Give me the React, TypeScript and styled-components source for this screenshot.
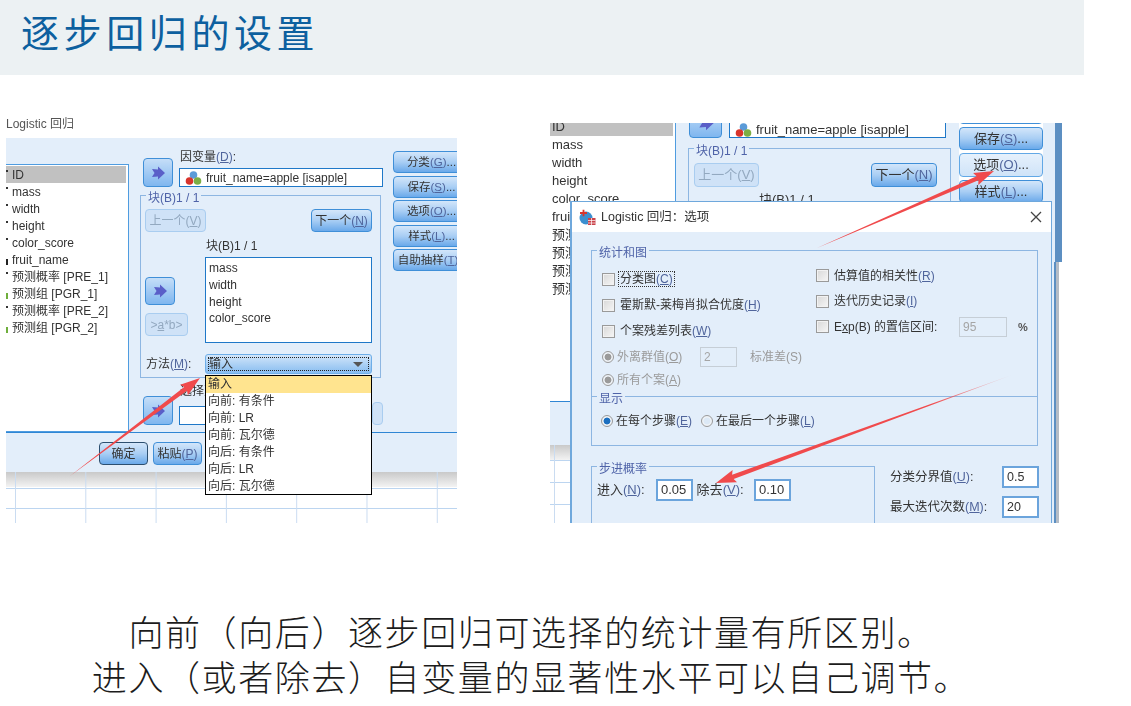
import React from "react";
import styled, { createGlobalStyle } from "styled-components";

const Global = createGlobalStyle`
  html, body { margin: 0; padding: 0; background: #fff; }
  body { font-family: "Liberation Sans", "Noto Sans CJK SC", sans-serif; }
  * { box-sizing: border-box; }
`;

const BLUE = "#e3eefa";
const LINE = "#8db6e2";
const EDGE = "#3f8fd8";
const UI = `"Liberation Sans", "Noto Sans CJK SC", sans-serif`;

const Page = styled.div`
  position: relative;
  width: 1131px;
  height: 706px;
  overflow: hidden;
  background: #fff;
`;
const Header = styled.header`
  width: 1084px;
  height: 75px;
  background: #ecf1f3;
  padding: 9px 0 0 21px;
`;
const Title = styled.h1`
  margin: 0;
  font: 400 38px/44px "Noto Sans CJK SC", sans-serif;
  letter-spacing: 4.6px;
  color: #0d609f;
`;
const Shots = styled.section`
  display: flex;
  align-items: flex-start;
  gap: 93px;
  padding: 42px 0 0 6px;
`;
const Caption = styled.p`
  width: 1062px;
  margin: 85px 0 0;
  text-align: center;
  font: 300 35px/45px "Noto Sans CJK SC", sans-serif;
  letter-spacing: 1.6px;
  color: #1c1c1c;
`;

/* shared widgets */
const Shot = styled.div<{ $w: number; $h: number; $top?: number }>`
  position: relative;
  flex: none;
  width: ${(p) => p.$w}px;
  height: ${(p) => p.$h}px;
  margin-top: ${(p) => p.$top ?? 0}px;
  overflow: hidden;
  color: #333;
  font: 12px/14px ${UI};
  background: #fff;
  filter: blur(0.3px);
`;
const Btn = styled.div<{ $w?: number; $h?: number; $off?: boolean; $pale?: boolean; $strong?: boolean }>`
  flex: none;
  display: flex;
  align-items: center;
  justify-content: center;
  white-space: nowrap;
  width: ${(p) => (p.$w ? `${p.$w}px` : "auto")};
  height: ${(p) => p.$h ?? 22}px;
  border-radius: 4px;
  border: 1px solid ${(p) => (p.$strong ? "#2c4f70" : p.$off ? "#a9cdf0" : p.$pale ? "#62a8e6" : EDGE)};
  background: ${(p) =>
    p.$off
      ? "#cfe2f7"
      : p.$pale
      ? "linear-gradient(#e6f1fc, #cfe3f8)"
      : "linear-gradient(#d3e6fa, #a9cef4 50%, #6aa9ea)"};
  color: ${(p) => (p.$off ? "#93a9c0" : "#333")};
`;
const ArrowBtnBox = styled(Btn)`
  background: linear-gradient(#c5def8, #7fb6ef);
`;
const Field = styled.div<{ $w?: number; $h?: number; $mute?: boolean }>`
  flex: none;
  display: flex;
  align-items: center;
  gap: 4px;
  width: ${(p) => (p.$w ? `${p.$w}px` : "auto")};
  height: ${(p) => p.$h ?? 19}px;
  padding-left: 3px;
  background: ${(p) => (p.$mute ? "transparent" : "#fff")};
  border: ${(p) => (p.$mute ? "1px solid #c6ced6" : `2px solid #6ba4dc`)};
  color: ${(p) => (p.$mute ? "#a5a5a5" : "#333")};
  white-space: nowrap;
`;
const ThinField = styled(Field)`
  border: 1px solid #1f78c8;
  padding-left: 5px;
`;
const Group = styled.div<{ $w: number; $h: number; $ml?: number; $mt?: number }>`
  position: relative;
  flex: none;
  width: ${(p) => p.$w}px;
  height: ${(p) => p.$h}px;
  margin-left: ${(p) => p.$ml ?? 0}px;
  margin-top: ${(p) => p.$mt ?? 0}px;
  border: 1px solid ${LINE};
`;
const GroupLabel = styled.span`
  position: absolute;
  top: -5px;
  left: 5px;
  padding: 0 2px;
  background: ${BLUE};
  color: #4f63a8;
  white-space: nowrap;
`;
const VarItem = styled.div<{ $sel?: boolean; $h: number; $pl?: number }>`
  display: flex;
  align-items: center;
  height: ${(p) => p.$h}px;
  padding-left: ${(p) => p.$pl ?? 0}px;
  background: ${(p) => (p.$sel ? "#c1c1c1" : "transparent")};
  white-space: nowrap;
`;
const Marker = styled.i<{ $kind: string }>`
  flex: none;
  width: 6px;
  height: ${(p) => (p.$kind === "dark" ? 2 : 6)}px;
  margin-top: ${(p) => (p.$kind === "dark" ? -8 : 5)}px;
  background: ${(p) =>
    p.$kind === "dark"
      ? "linear-gradient(90deg, #333 0 2px, transparent 2px)"
      : p.$kind === "yellow"
      ? "linear-gradient(90deg, #222 0 2px, transparent 2px)"
      : "linear-gradient(90deg, #6fae3c 0 2px, transparent 2px)"};
`;
const Overlay = styled.svg`
  position: absolute;
  left: 0;
  top: 0;
  pointer-events: none;
`;
const MnText = styled.span`
  color: #50659c;
`;

/* left screenshot */
const WinCaption = styled.div`
  height: 21px;
  padding-top: 1px;
  line-height: 12px;
  color: #555;
  font-size: 12px;
`;
const LeftBody = styled.div`
  height: 334px;
  background: ${BLUE};
`;
const LeftMain = styled.div`
  display: flex;
  height: 294px;
`;
const VarList = styled.div`
  flex: none;
  width: 123px;
  height: 268px;
  margin-top: 26px;
  padding: 1px 2px 0 0;
  background: #fff;
  border: 1px solid #4f9ce0;
  border-left: 0;
`;
const CenterCol = styled.div`
  flex: none;
  width: 264px;
  padding: 12px 0 0 14px;
`;
const BottomRow = styled.div`
  display: flex;
  align-items: flex-end;
  gap: 6px;
`;
const FieldCol = styled.div`
  flex: none;
  display: flex;
  flex-direction: column;
  width: 204px;
`;
const FieldHead = styled.div`
  height: 18px;
  line-height: 15px;
  padding-left: 1px;
`;
const GroupInner = styled.div`
  padding: 13px 0 0 4px;
`;
const NavRow = styled.div`
  display: flex;
  justify-content: space-between;
  width: 227px;
`;
const BlockArea = styled.div`
  display: flex;
  width: 227px;
  margin-top: 7px;
`;
const BlockTools = styled.div`
  flex: none;
  width: 60px;
  padding-top: 38px;
  display: flex;
  flex-direction: column;
  gap: 8px;
`;
const BlockCol = styled.div`
  flex: none;
  width: 167px;
`;
const BlockHead = styled.div`
  height: 18px;
  line-height: 14px;
  padding-left: 1px;
`;
const BlockList = styled.div`
  height: 86px;
  padding: 2px 0 0 3px;
  background: #fff;
  border: 1px solid #1f78c8;
`;
const MethodRow = styled.div`
  display: flex;
  align-items: center;
  width: 227px;
  margin-top: 11px;
`;
const MethodLabel = styled.div`
  flex: none;
  width: 60px;
  padding-left: 1px;
`;
const Select = styled.div`
  position: relative;
  flex: none;
  width: 167px;
  height: 20px;
  padding: 2px;
  border: 1px solid #6eaee8;
  border-radius: 3px;
  background: linear-gradient(#d3e6fa, #88bdf0);
`;
const SelectFocus = styled.div`
  display: flex;
  align-items: center;
  justify-content: space-between;
  height: 100%;
  border: 1px dotted #222;
  padding: 0 5px 0 0;
  line-height: 12px;
`;
const Caret = styled.i`
  width: 0;
  height: 0;
  border-left: 5px solid transparent;
  border-right: 5px solid transparent;
  border-top: 5px solid #555;
`;
const Dropdown = styled.div`
  position: absolute;
  left: -1px;
  top: 20px;
  width: 167px;
  height: 120px;
  border: 1px solid #000;
  background: #fff;
  z-index: 3;
`;
const DropItem = styled.div<{ $on?: boolean }>`
  height: 17px;
  line-height: 17px;
  padding-left: 2px;
  white-space: nowrap;
  background: ${(p) => (p.$on ? "#ffe48f" : "transparent")};
`;
const SelRow = styled(BottomRow)`
  margin-top: 6px;
`;
const SelInput = styled.div`
  display: flex;
  align-items: flex-end;
  width: 204px;
`;
const SelBox = styled.div`
  flex: none;
  width: 193px;
  height: 19px;
  background: #fff;
  border: 1px solid #1f78c8;
`;
const SideCol = styled.div`
  flex: none;
  width: 64px;
  padding-top: 13px;
  display: flex;
  flex-direction: column;
  gap: 2.6px;
`;
const SideBtn = styled(Btn)<{ $pl?: number }>`
  width: 70px;
  padding-left: ${(p) => p.$pl ?? 0}px;
  font-size: 11.5px;
  border-top-right-radius: 0;
  border-bottom-right-radius: 0;
`;
const LeftBar = styled.div`
  display: flex;
  gap: 5px;
  height: 40px;
  padding: 9px 0 0 93px;
  border-top: 1px solid #2f86d4;
`;
const Sheet = styled.div<{ $h: number; $x: number; $y: number; $pitch: number }>`
  height: ${(p) => p.$h}px;
  background-color: #fff;
  background-image:
    linear-gradient(90deg, #cadcf1 1px, transparent 1px),
    linear-gradient(#c9c9c9, #f3f3f3),
    linear-gradient(#bcd5f0 1px, transparent 1px);
  background-size: 70.3px 100%, 100% 15px, 100% ${(p) => p.$pitch}px;
  background-position: ${(p) => p.$x}px 0, 0 0, 0 ${(p) => p.$y}px;
  background-repeat: repeat-x, no-repeat, repeat-y;
`;

/* right screenshot */
const BackTop = styled.div`
  display: flex;
  height: 278px;
`;
const BackList = styled.div`
  flex: none;
  width: 126px;
  padding-right: 2px;
  border-right: 1px solid #4f9ce0;
  font-size: 13px;
`;
const BackRows = styled.div`
  margin-top: -5px;
`;
const BackCenter = styled.div`
  flex: none;
  width: 283px;
  padding-left: 13px;
  background: ${BLUE};
`;
const BackDep = styled.div`
  display: flex;
  gap: 7px;
  height: 15px;
`;
const ClipArrow = styled.div`
  margin-top: -15px;
  flex: none;
`;
const BackField = styled(ThinField)`
  border-top: 0;
  font-size: 13px;
  height: 15px;
  width: 217px;
`;
const BackNav = styled.div`
  display: flex;
  justify-content: space-between;
  padding: 14px 13px 0 5px;
  font-size: 13px;
`;
const BackHead = styled.div`
  padding: 6px 0 0 70px;
  font-size: 13px;
`;
const BackSide = styled.div`
  flex: none;
  width: 84px;
  display: flex;
  flex-direction: column;
  gap: 3px;
  margin-top: -19px;
  font-size: 13px;
`;
const BackEdge = styled.div`
  flex: none;
  width: 19px;
  background: linear-gradient(90deg, ${BLUE} 0 12px, #5c8fc2 12px);
`;
const EdgeStrip = styled.div`
  position: absolute;
  left: 502px;
  top: 139px;
  bottom: 0;
  width: 10px;
  background: linear-gradient(90deg, ${BLUE} 0 2px, #5c8fc2 2px 4px, #b4bcc6 4px 7px, #fff 7px);
`;
const BackBar = styled.div`
  height: 44px;
  background: ${BLUE};
  border-top: 1px solid #2f86d4;
`;
const Dialog = styled.div`
  position: absolute;
  left: 20px;
  top: 78px;
  width: 482px;
  height: 330px;
  border: 1px solid #6fa8dc;
  border-left-width: 2px;
  border-bottom: 0;
  background: ${BLUE};
  font-size: 12px;
`;
const TitleBar = styled.div`
  display: flex;
  align-items: center;
  height: 30px;
  padding: 0 9px 0 7px;
  gap: 5px;
  background: #fff;
  color: #333;
`;
const TitleText = styled.div`
  flex: 1;
  font-size: 12.5px;
`;
const DialogBody = styled.div`
  padding: 18px 0 0 19px;
`;
const StatGrid = styled.div`
  display: grid;
  grid-template-columns: 214px 1fr;
  padding-left: 10px;
`;
const StatCol = styled.div<{ $top: number }>`
  padding-top: ${(p) => p.$top}px;
  display: flex;
  flex-direction: column;
`;
const CheckRow = styled.div<{ $h: number }>`
  display: flex;
  align-items: center;
  gap: 5px;
  height: ${(p) => p.$h}px;
  white-space: nowrap;
`;
const Check = styled.i`
  flex: none;
  width: 13px;
  height: 13px;
  border: 1px solid #9a9a9a;
  background: linear-gradient(135deg, #d8d8d8, #f6f6f6);
  box-shadow: inset 0 0 0 1px #f2f2f2;
`;
const Focus = styled.span`
  outline: 1px dotted #333;
  padding: 0 1px;
  margin-left: -1px;
`;
const Radio = styled.i<{ $on?: boolean; $off?: boolean }>`
  flex: none;
  width: 12px;
  height: 12px;
  border-radius: 50%;
  border: 1px solid #9a9a9a;
  background: radial-gradient(circle, ${(p) => (p.$on ? "#1c6fc0" : p.$off ? "#9a9a9a" : "#dce9f6")} 0 3px, #eef2f6 3.8px);
`;
const RadioRow = styled.div<{ $h: number; $off?: boolean }>`
  display: flex;
  align-items: center;
  gap: 3px;
  height: ${(p) => p.$h}px;
  white-space: nowrap;
  color: ${(p) => (p.$off ? "#9a9a9a" : "#333")};
`;
const OutlierLabel = styled.span`
  flex: none;
  width: 80px;
`;
const UnitLabel = styled.span`
  margin-left: 10px;
`;
const PctLabel = styled.span`
  flex: none;
  width: 120px;
`;
const Pct = styled.b`
  margin-left: 6px;
  font-weight: 700;
  font-size: 11px;
  color: #555;
`;
const DisplayRow = styled(RadioRow)`
  padding: 13px 0 0 9px;
`;
const DisplayLabel = styled.span`
  flex: none;
  width: 82px;
`;
const LowerRow = styled.div`
  display: flex;
`;
const StepRow = styled.div`
  display: flex;
  align-items: center;
  padding: 12px 0 0 5px;
  font-size: 13px;
  white-space: nowrap;
`;
const StepLabel = styled.span<{ $w: number }>`
  flex: none;
  width: ${(p) => p.$w}px;
`;
const CutCol = styled.div`
  flex: none;
  margin: 20px 0 0 15px;
  width: 149px;
  display: flex;
  flex-direction: column;
  gap: 8px;
  font-size: 12.5px;
`;
const CutRow = styled.div`
  display: flex;
  align-items: center;
  justify-content: space-between;
  white-space: nowrap;
`;

/* drawings */
const BentArrow = ({ size = 18 }: { size?: number }) => (
  <svg width={size} height={size} viewBox="0 0 18 18">
    <path d="M3 5 L9 5.5 L9 2.5 L16 9 L9 15.5 L9 12.5 L3 13 L5.5 9 Z" fill="#5a5fc8" />
  </svg>
);
const Balls = () => (
  <svg width="17" height="16" viewBox="0 0 17 16">
    <circle cx="8.5" cy="5" r="3.8" fill="#5b9bd8" />
    <circle cx="4.5" cy="11" r="3.8" fill="#d8342c" />
    <circle cx="12.5" cy="11" r="3.8" fill="#7cae44" />
  </svg>
);
const DialogIcon = () => (
  <svg width="17" height="17" viewBox="0 0 17 17">
    <circle cx="7" cy="9" r="6.5" fill="#3b8fd0" />
    <path d="M1 4h7M4.5 .8v6.5" stroke="#d8342c" strokeWidth="1.8" />
    <rect x="9" y="9" width="7.5" height="7" fill="#c9434a" />
    <path d="M9 11.5h7.5M9 14h7.5M12.5 9v7" stroke="#fff" strokeWidth=".7" />
  </svg>
);
const CloseX = () => (
  <svg width="12" height="12" viewBox="0 0 12 12">
    <path d="M1 1 L11 11 M11 1 L1 11" stroke="#444" strokeWidth="1.3" />
  </svg>
);
function arrowShape(x1: number, y1: number, x2: number, y2: number, headLen: number, headW: number, shaft: number) {
  const len = Math.hypot(x2 - x1, y2 - y1);
  const ux = (x2 - x1) / len;
  const uy = (y2 - y1) / len;
  const nx = -uy;
  const ny = ux;
  const bx = x2 - ux * headLen;
  const by = y2 - uy * headLen;
  const pts = [
    [x1, y1],
    [bx + (nx * shaft) / 2, by + (ny * shaft) / 2],
    [bx + (nx * headW) / 2 - ux * 2, by + (ny * headW) / 2 - uy * 2],
    [x2, y2],
    [bx - (nx * headW) / 2 - ux * 2, by - (ny * headW) / 2 - uy * 2],
    [bx - (nx * shaft) / 2, by - (ny * shaft) / 2],
  ];
  return pts.map((p) => p.map((v) => v.toFixed(1)).join(",")).join(" ");
}

const Mn = ({ k }: { k: string }) => (
  <MnText>
    (<u>{k}</u>)
  </MnText>
);

const vars: [string, string][] = [
  ["ID", "dark"],
  ["mass", "dark"],
  ["width", "dark"],
  ["height", "dark"],
  ["color_score", "dark"],
  ["fruit_name", "yellow"],
  ["预测概率 [PRE_1]", "dark"],
  ["预测组 [PGR_1]", "green"],
  ["预测概率 [PRE_2]", "dark"],
  ["预测组 [PGR_2]", "green"],
];
const block = ["mass", "width", "height", "color_score"];
const methods = ["输入", "向前: 有条件", "向前: LR", "向前: 瓦尔德", "向后: 有条件", "向后: LR", "向后: 瓦尔德"];
const sideLeft: [string, string][] = [
  ["分类", "G"],
  ["保存", "S"],
  ["选项", "O"],
  ["样式", "L"],
];
const backVars = ["ID", "mass", "width", "height", "color_score", "fruit_name", "预测概率 [PRE_1]", "预测组 [PGR_1]", "预测概率 [PRE_2]", "预测组 [PGR_2]"];

const LeftShot = () => (
  <Shot $w={451} $h={406}>
    <WinCaption>Logistic 回归</WinCaption>
    <LeftBody>
      <LeftMain>
        <VarList>
          {vars.map(([name, kind], i) => (
            <VarItem key={name} $h={17} $sel={i === 0}>
              <Marker $kind={kind} />
              {name}
            </VarItem>
          ))}
        </VarList>
        <CenterCol>
          <BottomRow>
            <ArrowBtnBox $w={30} $h={29}>
              <BentArrow />
            </ArrowBtnBox>
            <FieldCol>
              <FieldHead>
                因变量<Mn k="D" />:
              </FieldHead>
              <ThinField $h={19}>
                <Balls />
                <span>fruit_name=apple [isapple]</span>
              </ThinField>
            </FieldCol>
          </BottomRow>
          <Group $w={241} $h={183} $ml={-3} $mt={8}>
            <GroupLabel>块(B)1 / 1</GroupLabel>
            <GroupInner>
              <NavRow>
                <Btn $w={61} $h={23} $off>
                  <span>上一个(<u>V</u>)</span>
                </Btn>
                <Btn $w={61} $h={23}>
                  <span>
                    下一个<Mn k="N" />
                  </span>
                </Btn>
              </NavRow>
              <BlockArea>
                <BlockTools>
                  <ArrowBtnBox $w={30} $h={28}>
                    <BentArrow />
                  </ArrowBtnBox>
                  <Btn $w={43} $h={23} $off>
                    <span>
                      &gt;<u>a</u>*b&gt;
                    </span>
                  </Btn>
                </BlockTools>
                <BlockCol>
                  <BlockHead>块(B)1 / 1</BlockHead>
                  <BlockList>
                    {block.map((b) => (
                      <VarItem key={b} $h={16.7}>
                        {b}
                      </VarItem>
                    ))}
                  </BlockList>
                </BlockCol>
              </BlockArea>
              <MethodRow>
                <MethodLabel>
                  方法<Mn k="M" />:
                </MethodLabel>
                <Select>
                  <SelectFocus>
                    输入
                    <Caret />
                  </SelectFocus>
                  <Dropdown>
                    {methods.map((m, i) => (
                      <DropItem key={i} $on={i === 0}>
                        {m}
                      </DropItem>
                    ))}
                  </Dropdown>
                </Select>
              </MethodRow>
            </GroupInner>
          </Group>
          <SelRow>
            <ArrowBtnBox $w={30} $h={29}>
              <BentArrow />
            </ArrowBtnBox>
            <FieldCol>
              <FieldHead>选择变量</FieldHead>
              <SelInput>
                <SelBox />
                <Btn $w={11} $h={23} $off />
              </SelInput>
            </FieldCol>
          </SelRow>
        </CenterCol>
        <SideCol>
          {sideLeft.map(([t, k]) => (
            <SideBtn key={k} $pl={7}>
              <span>
                {t}
                <Mn k={k} />
                ...
              </span>
            </SideBtn>
          ))}
          <SideBtn>
            <span>
              自助抽样
              <Mn k="T" />
            </span>
          </SideBtn>
        </SideCol>
      </LeftMain>
      <LeftBar>
        <Btn $w={49} $h={23} $strong>
          确定
        </Btn>
        <Btn $w={49} $h={23}>
          <span>
            粘贴<Mn k="P" />
          </span>
        </Btn>
      </LeftBar>
    </LeftBody>
    <Sheet $h={51} $x={9} $y={16} $pitch={20} />
    <Overlay width={451} height={406} viewBox="6 117 451 406">
      <polygon points={arrowShape(70, 476, 200, 378, 18, 13, 4.6)} fill="#f04a4c" />
    </Overlay>
  </Shot>
);

const RightShot = () => (
  <Shot $w={512} $h={400} $top={6}>
    <BackTop>
      <BackList>
        <BackRows>
          {backVars.map((v, i) => (
            <VarItem key={v} $h={18} $pl={2} $sel={i === 0}>
              {v}
            </VarItem>
          ))}
        </BackRows>
      </BackList>
      <BackCenter>
        <BackDep>
          <ClipArrow>
            <ArrowBtnBox $w={33} $h={30}>
              <BentArrow size={20} />
            </ArrowBtnBox>
          </ClipArrow>
          <BackField>
            <Balls />
            <span>fruit_name=apple [isapple]</span>
          </BackField>
        </BackDep>
        <Group $w={263} $h={200} $mt={10} $ml={-1}>
          <GroupLabel>块(B)1 / 1</GroupLabel>
          <BackNav>
            <Btn $w={65} $h={24} $off>
              <span>上一个(<u>V</u>)</span>
            </Btn>
            <Btn $w={66} $h={24}>
              <span>
                下一个<Mn k="N" />
              </span>
            </Btn>
          </BackNav>
          <BackHead>块(B)1 / 1</BackHead>
        </Group>
      </BackCenter>
      <BackSide>
        <Btn $h={20} />
        <Btn $h={23}>
          <span>
            保存<Mn k="S" />
            ...
          </span>
        </Btn>
        <Btn $h={24} $pale>
          <span>
            选项<Mn k="O" />
            ...
          </span>
        </Btn>
        <Btn $h={23}>
          <span>
            样式<Mn k="L" />
            ...
          </span>
        </Btn>
      </BackSide>
      <BackEdge />
    </BackTop>
    <BackBar />
    <Sheet $h={78} $x={4} $y={15} $pitch={22} />
    <EdgeStrip />
    <Dialog>
      <TitleBar>
        <DialogIcon />
        <TitleText>Logistic 回归：选项</TitleText>
        <CloseX />
      </TitleBar>
      <DialogBody>
        <Group $w={447} $h={147}>
          <GroupLabel>统计和图</GroupLabel>
          <StatGrid>
            <StatCol $top={15}>
              <CheckRow $h={26}>
                <Check />
                <Focus>
                  分类图<Mn k="C" />
                </Focus>
              </CheckRow>
              <CheckRow $h={26}>
                <Check />
                <span>
                  霍斯默-莱梅肖拟合优度<Mn k="H" />
                </span>
              </CheckRow>
              <CheckRow $h={26}>
                <Check />
                <span>
                  个案残差列表<Mn k="W" />
                </span>
              </CheckRow>
              <RadioRow $h={26} $off>
                <Radio $off />
                <OutlierLabel>外离群值(<u>O</u>)</OutlierLabel>
                <Field $w={37} $h={20} $mute>
                  2
                </Field>
                <UnitLabel>标准差(S)</UnitLabel>
              </RadioRow>
              <RadioRow $h={19} $off>
                <Radio $off />
                <span>所有个案(<u>A</u>)</span>
              </RadioRow>
            </StatCol>
            <StatCol $top={12}>
              <CheckRow $h={25.5}>
                <Check />
                <span>
                  估算值的相关性<Mn k="R" />
                </span>
              </CheckRow>
              <CheckRow $h={25.5}>
                <Check />
                <span>
                  迭代历史记录<Mn k="I" />
                </span>
              </CheckRow>
              <CheckRow $h={25.5}>
                <Check />
                <PctLabel>
                  E<u>x</u>p(B) 的置信区间:
                </PctLabel>
                <Field $w={48} $h={20} $mute>
                  95
                </Field>
                <Pct>%</Pct>
              </CheckRow>
            </StatCol>
          </StatGrid>
        </Group>
        <Group $w={447} $h={50} $mt={-1}>
          <GroupLabel>显示</GroupLabel>
          <DisplayRow $h={34}>
            <Radio $on />
            <DisplayLabel>
              在每个步骤<Mn k="E" />
            </DisplayLabel>
            <Radio />
            <span>
              在最后一个步骤<Mn k="L" />
            </span>
          </DisplayRow>
        </Group>
        <LowerRow>
          <Group $w={284} $h={80} $mt={20}>
            <GroupLabel>步进概率</GroupLabel>
            <StepRow>
              <StepLabel $w={59}>
                进入<Mn k="N" />:
              </StepLabel>
              <Field $w={37} $h={22}>
                0.05
              </Field>
              <StepLabel $w={61}>
                &nbsp;除去<Mn k="V" />:
              </StepLabel>
              <Field $w={37} $h={22}>
                0.10
              </Field>
            </StepRow>
          </Group>
          <CutCol>
            <CutRow>
              <span>
                分类分界值<Mn k="U" />:
              </span>
              <Field $w={37} $h={22}>
                0.5
              </Field>
            </CutRow>
            <CutRow>
              <span>
                最大迭代次数<Mn k="M" />:
              </span>
              <Field $w={37} $h={22}>
                20
              </Field>
            </CutRow>
          </CutCol>
        </LowerRow>
      </DialogBody>
    </Dialog>
    <Overlay width={512} height={400} viewBox="550 123 512 400">
      <defs>
        <linearGradient id="fade" gradientUnits="userSpaceOnUse" x1="1012" y1="375" x2="930" y2="405">
          <stop offset="0" stopColor="#f04a4c" stopOpacity="0.1" />
          <stop offset="1" stopColor="#f04a4c" />
        </linearGradient>
      </defs>
      <polygon points={arrowShape(817, 248, 994, 171, 18, 13, 4.4)} fill="#f04a4c" />
      <polygon points={arrowShape(1012, 375, 716, 483, 18, 13, 4.6)} fill="url(#fade)" />
    </Overlay>
  </Shot>
);

export default function App() {
  return (
    <Page>
      <Global />
      <Header>
        <Title>逐步回归的设置</Title>
      </Header>
      <Shots>
        <LeftShot />
        <RightShot />
      </Shots>
      <Caption>
        向前（向后）逐步回归可选择的统计量有所区别。
        <br />
        进入（或者除去）自变量的显著性水平可以自己调节。
      </Caption>
    </Page>
  );
}
